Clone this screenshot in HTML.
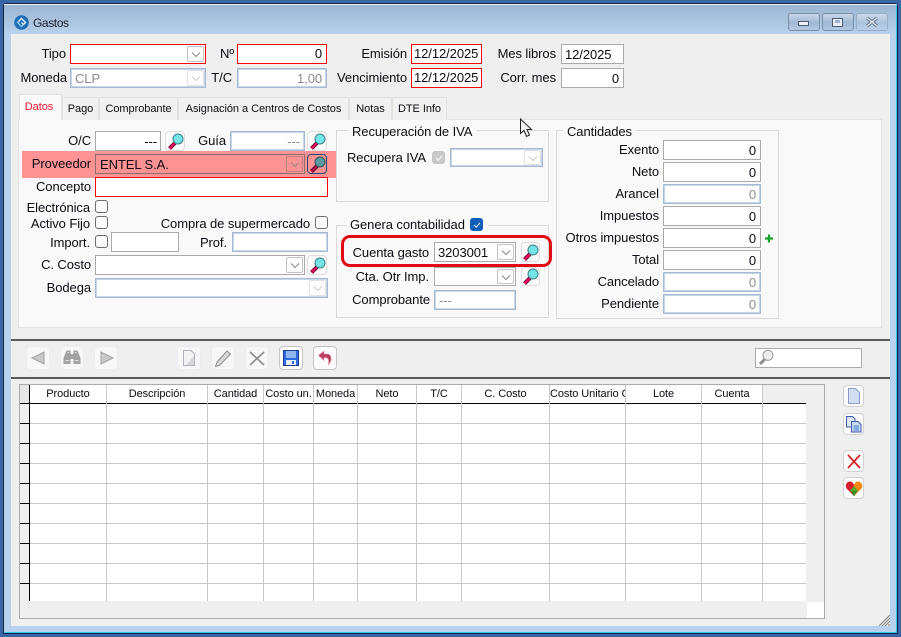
<!DOCTYPE html>
<html lang="es">
<head>
<meta charset="utf-8">
<title>Gastos</title>
<style>
html,body{margin:0;padding:0;width:901px;height:637px;overflow:hidden;background:#3a66a7;font-family:"Liberation Sans",Arial,sans-serif;font-size:13px;color:#0c0c14;letter-spacing:-.08px}
div,span,svg{position:absolute;box-sizing:border-box}
.l{text-align:right;height:20px;line-height:20px;white-space:nowrap;left:0}
.t{white-space:nowrap;height:20px;line-height:20px}
.f{background:#fff;border:1px solid #aaa;height:20px;line-height:19px;padding:0 3px;white-space:nowrap}
.r{border-color:#f00;line-height:17px}
.d{border:1px solid #a8b9d2;box-shadow:inset 0 0 0 1px #c6d6ea;color:#8c8c8c}
.n{text-align:right;padding-right:4px}
.c{position:absolute;right:1px;top:1px;width:17px;height:16px;border:1px solid #c4c4c4;border-radius:2px;background:#fdfdfd}
.c svg{left:3px;top:3px;width:10px;height:9px}
.b{background:#fbfbfb;border:1px solid #dedede;border-radius:4px}
.k{width:13px;height:13px;border:1px solid #6e6e6e;border-radius:3px;background:#fbfbfb}
.tab{top:97px;height:23px;background:#f1f1f1;border:1px solid #e2e2e2;border-bottom:0;font-size:11px;line-height:22px;text-align:center;white-space:nowrap;letter-spacing:-.05px}
.g{border:1px solid #d9d9d9}
.lg{background:#f9f9f9;padding:0 4px;height:16px;line-height:15px;white-space:nowrap}
.tb{top:346px;width:24px;height:24px;background:#f7f7f7;border:1px solid #ececec;border-radius:4px}
.tb.on{background:#fcfcfc;border-color:#c4c4c4}
.v{top:385px;width:1px;height:216px;background:#c8c8c8}
.h{top:385px;height:18px;line-height:19px;font-size:11px;text-align:center;overflow:hidden;white-space:nowrap;background:#fff;letter-spacing:-.08px}
.sb{left:843px;width:21px;height:22px;background:#fbfbfb;border:1px solid #d2d2d2;border-radius:4px}
.m{left:2px;top:1px;width:16px;height:17px}
</style>
</head>
<body>
<svg width="0" height="0" style="left:0;top:0">
<symbol id="mag" viewBox="0 0 16 17">
<path d="M1.5 15.5 L7 10" stroke="#6b0030" stroke-width="4" fill="none"/>
<path d="M1.5 15.5 L7 10" stroke="#ec1064" stroke-width="2" fill="none"/>
<circle cx="10" cy="6" r="5" fill="#74e6e6" stroke="#3f7f88" stroke-width="1"/>
</symbol>
<symbol id="magd" viewBox="0 0 16 17">
<path d="M1.5 15.5 L7 10" stroke="#4a0020" stroke-width="4" fill="none"/>
<path d="M1.5 15.5 L7 10" stroke="#c80a4e" stroke-width="2" fill="none"/>
<circle cx="10" cy="6" r="5" fill="#5c9a9c" stroke="#2d5560" stroke-width="1"/>
</symbol>
<symbol id="chev" viewBox="0 0 10 9"><path d="M1 2.5 L5 6.5 L9 2.5" fill="none" stroke="#888" stroke-width="1"/></symbol>
<symbol id="chevd" viewBox="0 0 10 9"><path d="M1 2.5 L5 6.5 L9 2.5" fill="none" stroke="#cfcfcf" stroke-width="1"/></symbol>
</svg>

<!-- window frame -->
<div style="left:3px;top:3px;width:895px;height:631px;background:#b8d1ec;border:1px solid #14233f;border-radius:3px 3px 0 0"></div>
<div style="left:4px;top:4px;width:893px;height:629px;border:1px solid #2fc6ec;border-top-color:#e8f0f8;border-left-color:#b8d1ec"></div>
<div style="left:4px;top:5px;width:892px;height:29px;background:linear-gradient(#9ab4d2,#b8d1ec)"></div>

<!-- title -->
<svg style="left:14px;top:15px" width="15" height="15" viewBox="0 0 15 15">
<circle cx="7.5" cy="7.5" r="7.3" fill="#1f6eb4"/>
<path d="M3.5 7.5 L7.5 3.5 L11.5 7.5 L9.5 9.5 L7.5 7.5" fill="none" stroke="#e6f1fa" stroke-width="1.4"/>
<path d="M5.5 6 L3.5 7.5 L7.5 11.5 L9.5 9.5" fill="none" stroke="#9fcbeb" stroke-width="1.2"/>
</svg>
<div class="t" style="left:33px;top:13px;font-size:12px;letter-spacing:-.4px;color:#1c1c24">Gastos</div>
<div style="left:788px;top:13px;width:32px;height:18px;border:1px solid #7a8ea8;border-radius:3px;background:linear-gradient(#c8d8ea,#a0b7d3 55%,#b4cae3)"></div>
<div style="left:798px;top:21px;width:11px;height:5px;background:#eef2f7;border:1px solid #4c5d76"></div>
<div style="left:822px;top:13px;width:32px;height:18px;border:1px solid #7a8ea8;border-radius:3px;background:linear-gradient(#c8d8ea,#a0b7d3 55%,#b4cae3)"></div>
<div style="left:832px;top:18px;width:11px;height:9px;background:#e8eef5;border:1px solid #4c5d76"></div>
<div style="left:835px;top:20px;width:5px;height:3px;background:#a0b7d3"></div>
<div style="left:856px;top:13px;width:32px;height:18px;border:1px solid #98adc8;border-radius:3px;background:linear-gradient(#ccdaec,#adc3dd 55%,#bcd1e9)"></div>
<svg style="left:865px;top:16px" width="14" height="12" viewBox="0 0 14 12"><path d="M2 2 L12 10 M12 2 L2 10" stroke="#5f7088" stroke-width="3.2"/><path d="M2 2 L12 10 M12 2 L2 10" stroke="#e8eef5" stroke-width="1.3"/></svg>

<!-- client -->
<div style="left:11px;top:34px;width:879px;height:592px;background:#efefef"></div>

<!-- header fields -->
<div class="l" style="width:66px;top:44px">Tipo</div>
<div class="f r" style="left:70px;top:44px;width:136px"><div class="c"><svg><use href="#chev"/></svg></div></div>
<div class="l" style="width:234px;top:44px">Nº</div>
<div class="f r n" style="left:237px;top:44px;width:90px">0</div>
<div class="l" style="width:407px;top:44px">Emisión</div>
<div class="f r" style="left:411px;top:44px;width:71px;padding-left:2px">12/12/2025</div>
<div class="l" style="width:556px;top:44px">Mes libros</div>
<div class="f" style="left:561px;top:44px;width:63px">12/2025</div>

<div class="l" style="width:67px;top:68px">Moneda</div>
<div class="f d" style="left:70px;top:68px;width:136px;padding-left:4px">CLP<div class="c" style="border-color:#e2e2e2"><svg><use href="#chevd"/></svg></div></div>
<div class="l" style="width:232px;top:68px">T/C</div>
<div class="f d n" style="left:237px;top:68px;width:90px">1,00</div>
<div class="l" style="width:407px;top:68px">Vencimiento</div>
<div class="f r" style="left:411px;top:68px;width:71px;padding-left:2px">12/12/2025</div>
<div class="l" style="width:556px;top:68px">Corr. mes</div>
<div class="f n" style="left:561px;top:68px;width:63px">0</div>

<!-- tabs -->
<div style="left:18px;top:119px;width:864px;height:209px;background:#f9f9f9;border:1px solid #e3e3e3"></div>
<div class="tab" style="left:62px;width:37px">Pago</div>
<div class="tab" style="left:99px;width:79px">Comprobante</div>
<div class="tab" style="left:178px;width:171px">Asignación a Centros de Costos</div>
<div class="tab" style="left:349px;width:43px">Notas</div>
<div class="tab" style="left:392px;width:55px">DTE Info</div>
<div class="tab" style="left:19px;top:94px;width:43px;height:26px;background:#f9f9f9;color:#f0142d;line-height:24px;padding-right:3px">Datos</div>

<!-- datos left -->
<div class="l" style="width:91px;top:131px">O/C</div>
<div class="f n" style="left:95px;top:131px;width:66px;padding-right:3px">---</div>
<div class="b" style="left:165px;top:131px;width:20px;height:20px"><svg class="m"><use href="#mag"/></svg></div>
<div class="l" style="width:226px;top:131px">Guía</div>
<div class="f d n" style="left:230px;top:131px;width:75px;padding-right:4px">---</div>
<div class="b" style="left:307px;top:131px;width:20px;height:20px"><svg class="m"><use href="#mag"/></svg></div>

<div style="left:22px;top:151px;width:314px;height:27px;background:#ff9393"></div>
<div class="l" style="width:91px;top:154px">Proveedor</div>
<div class="f" style="left:95px;top:154px;width:210px;background:#ff9393;border-color:#8d6f6f;padding-left:4px">ENTEL S.A.<div class="c" style="background:#ff9393;border-color:#b98484"><svg><use href="#chev"/></svg></div></div>
<div class="b" style="left:307px;top:154px;width:20px;height:20px;background:#ff9393;border-color:#1f4a72"><svg class="m"><use href="#magd"/></svg></div>
<div class="l" style="width:91px;top:177px">Concepto</div>
<div class="f r" style="left:95px;top:177px;width:233px"></div>

<div class="l" style="width:90px;top:198px">Electrónica</div>
<div class="k" style="left:95px;top:200px"></div>
<div class="l" style="width:90px;top:214px">Activo Fijo</div>
<div class="k" style="left:95px;top:216px"></div>
<div class="l" style="width:310px;top:214px">Compra de supermercado</div>
<div class="k" style="left:315px;top:216px"></div>
<div class="l" style="width:90px;top:233px">Import.</div>
<div class="k" style="left:95px;top:235px"></div>
<div class="f" style="left:111px;top:232px;width:68px"></div>
<div class="l" style="width:227px;top:233px">Prof.</div>
<div class="f d" style="left:232px;top:232px;width:96px"></div>
<div class="l" style="width:91px;top:255px">C. Costo</div>
<div class="f" style="left:95px;top:255px;width:210px"><div class="c"><svg><use href="#chev"/></svg></div></div>
<div class="b" style="left:307px;top:255px;width:20px;height:20px"><svg class="m"><use href="#mag"/></svg></div>
<div class="l" style="width:91px;top:278px">Bodega</div>
<div class="f d" style="left:95px;top:278px;width:233px"><div class="c" style="border-color:#e2e2e2"><svg><use href="#chevd"/></svg></div></div>

<!-- Recuperación -->
<div class="g" style="left:336px;top:130px;width:213px;height:72px"></div>
<div class="lg" style="left:348px;top:124px">Recuperación de IVA</div>
<div class="t" style="left:347px;top:148px">Recupera IVA</div>
<div class="k" style="left:432px;top:151px;background:#c9c9c9;border-color:#c4c4c4"><svg style="left:2px;top:2px" width="8" height="8" viewBox="0 0 8 8"><path d="M1 4 L3.2 6.2 L7 1.8" fill="none" stroke="#f4f4f4" stroke-width="1.2"/></svg></div>
<div class="f d" style="left:450px;top:148px;width:93px;height:19px"><div class="c" style="border-color:#e2e2e2;height:15px"><svg><use href="#chevd"/></svg></div></div>

<!-- Genera -->
<div class="g" style="left:336px;top:225px;width:213px;height:93px"></div>
<div class="lg" style="left:346px;top:217px;width:142px">Genera contabilidad</div>
<div class="k" style="left:470px;top:218px;background:#0f5fb8;border-color:#0f5fb8"><svg style="left:2px;top:2px" width="8" height="8" viewBox="0 0 8 8"><path d="M1 4 L3.2 6.2 L7 1.8" fill="none" stroke="#dbe9f8" stroke-width="1.1"/></svg></div>
<div style="left:341px;top:235px;width:211px;height:32px;border:3px solid #e20a14;border-radius:9px"></div>
<div class="l" style="width:429px;top:243px">Cuenta gasto</div>
<div class="f" style="left:434px;top:242px;width:82px">3203001<div class="c"><svg><use href="#chev"/></svg></div></div>
<div class="b" style="left:521px;top:242px;width:19px;height:20px"><svg class="m" style="left:1px"><use href="#mag"/></svg></div>
<div class="l" style="width:429px;top:267px">Cta. Otr Imp.</div>
<div class="f" style="left:434px;top:267px;width:82px;height:19px"><div class="c" style="height:15px"><svg><use href="#chev"/></svg></div></div>
<div class="b" style="left:521px;top:267px;width:19px;height:19px"><svg class="m" style="left:1px;top:0"><use href="#mag"/></svg></div>
<div class="l" style="width:430px;top:290px">Comprobante</div>
<div class="f d" style="left:434px;top:290px;width:82px;padding-left:4px">---</div>

<!-- Cantidades -->
<div class="g" style="left:556px;top:130px;width:223px;height:189px"></div>
<div class="lg" style="left:563px;top:124px">Cantidades</div>
<div class="l" style="width:659px;top:140px">Exento</div>
<div class="f n" style="left:663px;top:140px;width:98px">0</div>
<div class="l" style="width:659px;top:162px">Neto</div>
<div class="f n" style="left:663px;top:162px;width:98px">0</div>
<div class="l" style="width:659px;top:184px">Arancel</div>
<div class="f d n" style="left:663px;top:184px;width:98px">0</div>
<div class="l" style="width:659px;top:206px">Impuestos</div>
<div class="f n" style="left:663px;top:206px;width:98px">0</div>
<div class="l" style="width:659px;top:228px">Otros impuestos</div>
<div class="f n" style="left:663px;top:228px;width:98px">0</div>
<svg style="left:765px;top:234px" width="8" height="9" viewBox="0 0 8 9"><path d="M4 .5 V8.5 M0 4.5 H8" stroke="#16a32a" stroke-width="2.2"/></svg>
<div class="l" style="width:659px;top:250px">Total</div>
<div class="f n" style="left:663px;top:250px;width:98px">0</div>
<div class="l" style="width:659px;top:272px">Cancelado</div>
<div class="f d n" style="left:663px;top:272px;width:98px">0</div>
<div class="l" style="width:659px;top:294px">Pendiente</div>
<div class="f d n" style="left:663px;top:294px;width:98px">0</div>

<!-- cursor -->
<svg style="left:519px;top:118px" width="15" height="20" viewBox="0 0 15 20"><path d="M1.5 1 V15.5 L5 12.5 L7.5 18.5 L10.5 17 L8 11.5 H12.5 Z" fill="#f2f2f2" stroke="#222" stroke-width="1"/></svg>

<!-- separators -->
<div style="left:11px;top:339px;width:879px;height:2px;background:#595959"></div>
<div style="left:11px;top:377px;width:879px;height:2px;background:#595959"></div>

<!-- toolbar -->
<div class="tb" style="left:26px"><svg style="left:4px;top:4px" width="14" height="14" viewBox="0 0 14 14"><path d="M13 1 V13 L1 7 Z" fill="#c8c8c8" stroke="#a0a0a0"/></svg></div>
<div class="tb" style="left:60px"><svg style="left:2px;top:3px" width="18" height="15" viewBox="0 0 18 15"><path d="M3.5 .5 H7.5 V14 H.5 V8 Z M10.5 .5 H14.5 L17.5 8 V14 H10.5 Z M7.5 4 H10.5 V9 H7.5 Z" fill="#a2a2a2"/><path d="M2.5 10.5 H6 M12 10.5 H15.5 M4.5 2.5 H6 M12 2.5 H13.5" stroke="#e2e2e2"/></svg></div>
<div class="tb" style="left:94px"><svg style="left:5px;top:4px" width="14" height="14" viewBox="0 0 14 14"><path d="M1 1 V13 L13 7 Z" fill="#c8c8c8" stroke="#a0a0a0"/></svg></div>
<div class="tb" style="left:177px"><svg style="left:4px;top:2px" width="14" height="18" viewBox="0 0 14 18"><path d="M1.5 1.5 H9 L12.5 5 V16.5 H1.5 Z" fill="#f4f4f4" stroke="#b0b0c0"/><path d="M12 7 V16 H4 Z" fill="#d8d8d8"/></svg></div>
<div class="tb" style="left:211px"><svg style="left:2px;top:2px" width="18" height="19" viewBox="0 0 18 19"><path d="M3 13 L13 2 L16.5 5 L6 16 L1.5 17.5 Z" fill="#d8d8d8" stroke="#8e8e8e"/></svg></div>
<div class="tb" style="left:245px"><svg style="left:2px;top:3px" width="18" height="17" viewBox="0 0 18 17"><path d="M2 2 L16 15 M16 2 L2 15" stroke="#8a8a8a" stroke-width="1.6"/></svg></div>
<div class="tb on" style="left:279px"><svg style="left:3px;top:3px" width="16" height="16" viewBox="0 0 16 16"><path d="M.5 .5 H15.5 V15.5 H.5 Z" fill="#2c68e0" stroke="#1f3f8c"/><rect x="3" y="1" width="10" height="7" fill="#8fb6ee"/><rect x="3" y="10" width="10" height="5" fill="#e4ecf8"/><rect x="9" y="11" width="2" height="3" fill="#2c68e0"/></svg></div>
<div class="tb on" style="left:313px"><svg style="left:3px;top:3px" width="17" height="17" viewBox="0 0 17 17"><path d="M7 1 V4 H10 C15 4 15.5 11 11 15 C12.5 11 11.5 7.5 8 7.5 H7 V10.5 L1.5 5.5 Z" fill="#b8405f" stroke="#ec8aa2" stroke-width=".6"/></svg></div>

<!-- search -->
<div class="f" style="left:755px;top:348px;width:107px"><svg style="left:2px;top:0" width="16" height="17" viewBox="0 0 16 17"><path d="M2 15 L7 10" stroke="#8c8c8c" stroke-width="3"/><circle cx="10" cy="6.3" r="5" fill="#eee" stroke="#9c9c9c"/></svg></div>

<!-- grid -->
<div style="left:19px;top:384px;width:806px;height:235px;background:#efefef;border:1px solid #ababab"></div>
<div style="left:30px;top:385px;width:776px;height:216px;background:repeating-linear-gradient(#fff 0,#fff 19px,#c8c8c8 19px,#c8c8c8 20px);background-position:0 -1px"></div>
<div style="left:807px;top:602px;width:17px;height:16px;background:#fff"></div>
<div class="h" style="left:30px;width:76px">Producto</div>
<div class="h" style="left:107px;width:100px">Descripción</div>
<div class="h" style="left:208px;width:55px">Cantidad</div>
<div class="h" style="left:264px;width:49px">Costo un.</div>
<div class="h" style="left:314px;width:43px">Moneda</div>
<div class="h" style="left:358px;width:58px">Neto</div>
<div class="h" style="left:417px;width:44px">T/C</div>
<div class="h" style="left:462px;width:87px">C. Costo</div>
<div class="h" style="left:550px;width:75px;text-align:left">Costo Unitario C</div>
<div class="h" style="left:626px;width:75px">Lote</div>
<div class="h" style="left:702px;width:60px">Cuenta</div>
<div style="left:763px;top:385px;width:43px;height:18px;background:#efefef"></div>
<div style="left:30px;top:403px;width:776px;height:1px;background:#000"></div>
<div class="v" style="left:106px"></div><div class="v" style="left:207px"></div><div class="v" style="left:263px"></div><div class="v" style="left:313px"></div><div class="v" style="left:357px"></div><div class="v" style="left:416px"></div><div class="v" style="left:461px"></div><div class="v" style="left:549px"></div><div class="v" style="left:625px"></div><div class="v" style="left:701px"></div><div class="v" style="left:762px"></div>
<div style="left:20px;top:385px;width:9px;height:216px;background:repeating-linear-gradient(#000 0,#000 1px,#efefef 1px,#efefef 20px);background-position:0 18px"></div>
<div style="left:20px;top:385px;width:9px;height:18px;background:#e6e6e6"></div>
<div style="left:29px;top:385px;width:1px;height:216px;background:#000"></div>
<div style="left:20px;top:601px;width:804px;height:1px;background:#efefef"></div>

<!-- side buttons -->
<div class="sb" style="top:385px"><svg style="left:3px;top:2px" width="14" height="17" viewBox="0 0 14 17"><path d="M1.5 .5 H8.5 L12.5 4.5 V15.5 H1.5 Z" fill="#d2ddf4" stroke="#8c9bc8"/></svg></div>
<div class="sb" style="top:413px"><svg style="left:2px;top:2px" width="16" height="17" viewBox="0 0 16 17"><path d="M.5 .5 H6.5 L9 3 V11 H.5 Z" fill="#dfe8f8" stroke="#3c59a8"/><path d="M5.5 5.5 H12 L15 8.5 V16 H5.5 Z" fill="#cddcf5" stroke="#3c59a8"/><path d="M7.5 10 H13 M7.5 12 H13 M7.5 14 H13" stroke="#3c7ac8"/></svg></div>
<div class="sb" style="top:450px"><svg style="left:3px;top:3px" width="14" height="15" viewBox="0 0 14 15"><path d="M1 1 L13 14 M13 1 L1 14" stroke="#d42020" stroke-width="1.7"/></svg></div>
<div class="sb" style="top:477px"><svg style="left:1px;top:2px" width="18" height="17" viewBox="0 0 18 17"><path d="M9 16 L1.5 8.5 C-.5 5 2 1.5 5 1.5 C7 1.5 8.5 3 9 5 Z" fill="#d8202c"/><path d="M9 16 L16.5 8.5 C18.5 5 16 1.5 13 1.5 C11 1.5 9.5 3 9 5 Z" fill="#ef8a12"/><path d="M9 6 L12.8 10.2 L9 16 L5.2 10.2 Z" fill="#58a82a"/><path d="M9 16 L5.5 11 H12.5 Z" fill="#3a8a28"/></svg></div>

<!-- grip -->
<svg style="left:879px;top:615px" width="11" height="11" viewBox="0 0 11 11"><path d="M0 11 L11 0 M3 11 L11 3 M6 11 L11 6 M9 11 L11 9" stroke="#8f8f8f" stroke-width="1.2"/></svg>
</body>
</html>
